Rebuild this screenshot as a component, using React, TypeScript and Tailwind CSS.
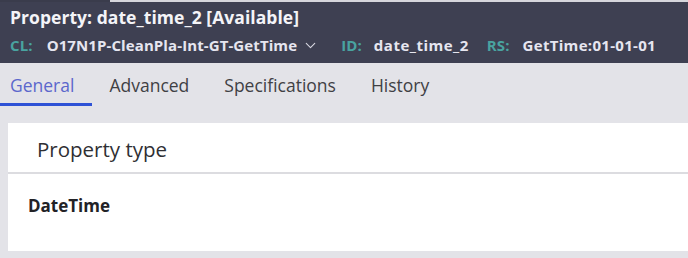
import { ChevronDown } from "lucide-react";

const TABS = ["General", "Advanced", "Specifications", "History"];

export default function App() {
  return (
    <div className="w-[688px] h-[258px] overflow-hidden bg-[#e3e3e8] font-['Open_Sans',sans-serif]">
      {/* top strip */}
      <div className="flex h-[2px]">
        <div className="w-[110px] bg-[#3a3c4c]" />
        <div className="flex-1 bg-[#d6d6dc]" />
      </div>
      {/* Header */}
      <div className="bg-[#3e4052] h-[61px] px-[10px] pt-[3px]">
        <h1 className="text-[17.5px] font-bold text-[#f4f4f8] leading-[24px] tracking-[0.05px]">
          Property: date_time_2 [Available]
        </h1>
        <div className="flex items-center text-[15px] font-bold leading-[20px] mt-[6px] tracking-[0.1px]">
          <span className="text-[#49a3a0]">CL:</span>
          <span className="ml-[14px] text-[#e6e6f0]">O17N1P-CleanPla-Int-GT-GetTime</span>
          <ChevronDown className="ml-[5px] w-[17px] h-[17px] text-[#d8d8e2]" strokeWidth={1.5} />
          <span className="ml-[22px] text-[#49a3a0]">ID:</span>
          <span className="ml-[12px] text-[#e6e6f0] tracking-[0.5px]">date_time_2</span>
          <span className="ml-[18px] text-[#49a3a0]">RS:</span>
          <span className="ml-[13px] text-[#e6e6f0] tracking-[0.3px]">GetTime:01-01-01</span>
        </div>
      </div>
      {/* Tabs */}
      <div className="flex h-[44px] pl-[10px] gap-[35px]">
        {TABS.map((t, i) => (
          <div key={t} className="relative flex items-center text-[17.5px] pt-[1px]">
            <span className={i === 0 ? "text-[#5b67cc]" : "text-[#3f4044]"}>{t}</span>
            {i === 0 && <div className="absolute bottom-[1px] -left-[10px] -right-[18px] h-[3px] bg-[#2e52d6]" />}
          </div>
        ))}
      </div>
      {/* Card */}
      <div className="ml-[8px] mt-[16px] bg-white h-[128px]">
        <div className="h-[51px] flex items-center pl-[29px] border-b-2 border-[#dcdce0] pt-[4px]">
          <span className="text-[20.5px] text-[#2f2f33]">Property type</span>
        </div>
        <div className="pl-[20px] pt-[19px]">
          <span className="text-[17px] font-bold text-[#222226]">DateTime</span>
        </div>
      </div>
    </div>
  );
}
